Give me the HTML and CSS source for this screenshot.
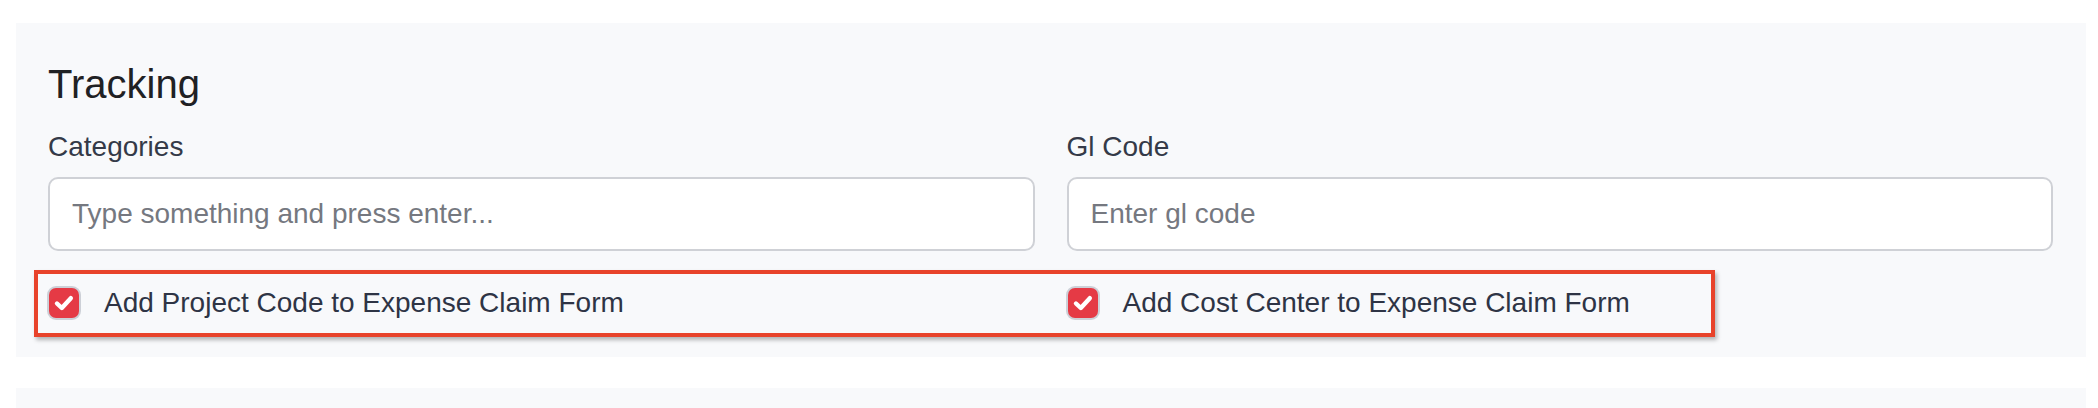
FILE: index.html
```html
<!DOCTYPE html>
<html>
<head>
<meta charset="utf-8">
<link rel="stylesheet" href="styles.css">
</head>
<body>
<section class="panel">
  <h2 class="title">Tracking</h2>
  <div class="grid">
    <div class="field">
      <label class="label">Categories</label>
      <input class="input" type="text" placeholder="Type something and press enter...">
    </div>
    <div class="field">
      <label class="label">Gl Code</label>
      <input class="input" type="text" placeholder="Enter gl code">
    </div>
    <label class="check">
      <span class="box"><svg viewBox="0 0 30 30" width="30" height="30"><path d="M8 15.5 L12.8 20 L21.8 10.2" fill="none" stroke="#fff" stroke-width="4.4" stroke-linecap="round" stroke-linejoin="round"/></svg></span>
      <span class="check-text">Add Project Code to Expense Claim Form</span>
    </label>
    <label class="check">
      <span class="box"><svg viewBox="0 0 30 30" width="30" height="30"><path d="M8 15.5 L12.8 20 L21.8 10.2" fill="none" stroke="#fff" stroke-width="4.4" stroke-linecap="round" stroke-linejoin="round"/></svg></span>
      <span class="check-text">Add Cost Center to Expense Claim Form</span>
    </label>
  </div>
  <div class="highlight"></div>
</section>
<section class="panel next"></section>
</body>
</html>
```

FILE: styles.css
```css
html, body {
  margin: 0;
  padding: 0;
  background: #ffffff;
}
body {
  font-family: "Liberation Sans", Arial, Helvetica, sans-serif;
  padding-top: 23px;
}
.panel {
  position: relative;
  margin: 0 12px 0 16px;
  background: #f8f9fb;
  padding: 37px 33px 33px 32px;
}
.title {
  margin: 0;
  font-size: 40px;
  line-height: 48px;
  font-weight: 400;
  color: #1f2124;
}
.grid {
  margin-top: 18px;
  display: grid;
  grid-template-columns: 1fr 1fr;
  column-gap: 32px;
}
.field {
  display: flex;
  flex-direction: column;
}
.label {
  font-size: 28px;
  line-height: 42px;
  color: #343a48;
  margin-bottom: 9px;
}
.input {
  box-sizing: border-box;
  height: 74px;
  width: 100%;
  border: 2px solid #cfd1d6;
  border-radius: 10px;
  background: #ffffff;
  padding: 0 22px;
  font-family: "Liberation Sans", Arial, Helvetica, sans-serif;
  font-size: 28px;
  color: #343a48;
  outline: none;
}
.input::placeholder {
  color: #757880;
  opacity: 1;
}
.check {
  margin-top: 31px;
  display: flex;
  align-items: center;
  height: 42px;
}
.box {
  box-sizing: border-box;
  width: 30px;
  height: 30px;
  border-radius: 7px;
  background: #e53a45;
  box-shadow: 0 0 0 2px #cdd0d7;
  display: flex;
  align-items: center;
  justify-content: center;
  margin-left: 1px;
}
.box svg {
  display: block;
}
.check-text {
  margin-left: 25px;
  font-size: 28px;
  line-height: 42px;
  color: #2e3445;
}
.highlight {
  position: absolute;
  left: 18px;
  top: 247px;
  width: 1673px;
  height: 59px;
  border: 4px solid #e8432b;
  box-shadow: 2px 3px 4px rgba(0, 0, 0, 0.28);
  pointer-events: none;
}
.next {
  margin-top: 31px;
  height: 40px;
  padding: 0;
}
```
